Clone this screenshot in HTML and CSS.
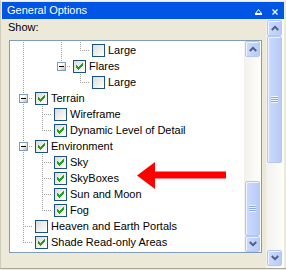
FILE: index.html
```html
<!DOCTYPE html>
<html lang="en">
<head>
  <meta charset="UTF-8">
  <title>General Options</title>
  <link rel="stylesheet" href="styles.css">
</head>
<body>
  <div class="window">
    <div class="titlebar">
      <span class="title">General Options</span>
      <span class="title-btns">
        <svg width="7" height="6" viewBox="0 0 7 6"><path d="M3.5 0.5 L6.5 4.5 L0.5 4.5 Z" fill="none" stroke="#fff"/><rect y="4" width="7" height="2" fill="#fff"/></svg>
        <svg width="6" height="6" viewBox="0 0 6 6"><path d="M0.5 0.5 L5.5 5.5 M5.5 0.5 L0.5 5.5" stroke="#fff" stroke-width="1.3"/></svg>
      </span>
    </div>

    <div class="content">
      <div class="pane">
        <div class="label">Show:</div>
        <div class="tree">
          <div class="rows">
            <div class="row"><span class="c i"></span><span class="c"></span><span class="c i"></span><span class="c l"></span><span class="chk"></span><span class="txt">Large</span></div>
            <div class="row"><span class="c i"></span><span class="c"></span><span class="c l"><span class="exp"></span></span><span class="chk on"><svg viewBox="0 0 7 7"><path d="M0 2H1V3H2V4H3V3H4V2H5V1H6V0H7V3H6V4H5V5H4V6H3V7H2V6H1V5H0Z"/></svg></span><span class="txt">Flares</span></div>
            <div class="row"><span class="c i"></span><span class="c"></span><span class="c"></span><span class="c l"></span><span class="chk"></span><span class="txt">Large</span></div>
            <div class="row"><span class="c t"><span class="exp"></span></span><span class="chk on"><svg viewBox="0 0 7 7"><path d="M0 2H1V3H2V4H3V3H4V2H5V1H6V0H7V3H6V4H5V5H4V6H3V7H2V6H1V5H0Z"/></svg></span><span class="txt">Terrain</span></div>
            <div class="row"><span class="c i"></span><span class="c t"></span><span class="chk"></span><span class="txt">Wireframe</span></div>
            <div class="row"><span class="c i"></span><span class="c l"></span><span class="chk on"><svg viewBox="0 0 7 7"><path d="M0 2H1V3H2V4H3V3H4V2H5V1H6V0H7V3H6V4H5V5H4V6H3V7H2V6H1V5H0Z"/></svg></span><span class="txt">Dynamic Level of Detail</span></div>
            <div class="row"><span class="c t"><span class="exp"></span></span><span class="chk on"><svg viewBox="0 0 7 7"><path d="M0 2H1V3H2V4H3V3H4V2H5V1H6V0H7V3H6V4H5V5H4V6H3V7H2V6H1V5H0Z"/></svg></span><span class="txt">Environment</span></div>
            <div class="row"><span class="c i"></span><span class="c t"></span><span class="chk on"><svg viewBox="0 0 7 7"><path d="M0 2H1V3H2V4H3V3H4V2H5V1H6V0H7V3H6V4H5V5H4V6H3V7H2V6H1V5H0Z"/></svg></span><span class="txt">Sky</span></div>
            <div class="row"><span class="c i"></span><span class="c t"></span><span class="chk on"><svg viewBox="0 0 7 7"><path d="M0 2H1V3H2V4H3V3H4V2H5V1H6V0H7V3H6V4H5V5H4V6H3V7H2V6H1V5H0Z"/></svg></span><span class="txt">SkyBoxes</span></div>
            <div class="row"><span class="c i"></span><span class="c t"></span><span class="chk on"><svg viewBox="0 0 7 7"><path d="M0 2H1V3H2V4H3V3H4V2H5V1H6V0H7V3H6V4H5V5H4V6H3V7H2V6H1V5H0Z"/></svg></span><span class="txt">Sun and Moon</span></div>
            <div class="row"><span class="c i"></span><span class="c l"></span><span class="chk on"><svg viewBox="0 0 7 7"><path d="M0 2H1V3H2V4H3V3H4V2H5V1H6V0H7V3H6V4H5V5H4V6H3V7H2V6H1V5H0Z"/></svg></span><span class="txt">Fog</span></div>
            <div class="row"><span class="c t"></span><span class="chk"></span><span class="txt">Heaven and Earth Portals</span></div>
            <div class="row"><span class="c l"></span><span class="chk on"><svg viewBox="0 0 7 7"><path d="M0 2H1V3H2V4H3V3H4V2H5V1H6V0H7V3H6V4H5V5H4V6H3V7H2V6H1V5H0Z"/></svg></span><span class="txt">Shade Read-only Areas</span></div>
          </div>

          <div class="sb sb-inner">
            <div class="sb-btn"><svg width="8" height="6" viewBox="0 0 8 6"><polyline points="0.8,5 4,1.8 7.2,5" fill="none" stroke="#4d6185" stroke-width="2"/></svg></div>
            <div class="sb-space"></div>
            <div class="sb-thumb thumb-inner"><span class="grip"></span></div>
            <div class="sb-btn"><svg width="8" height="6" viewBox="0 0 8 6"><polyline points="0.8,1 4,4.2 7.2,1" fill="none" stroke="#4d6185" stroke-width="2"/></svg></div>
          </div>

          <!-- red callout arrow -->
          <svg class="arrow" width="90" height="27" viewBox="0 0 90 27"><polygon points="0,13.5 18,0 18,9.5 89,9.5 89,16.5 18,16.5 18,27" fill="#ff0000"/></svg>
        </div>
      </div>

      <div class="sb sb-outer">
        <div class="sb-btn"><svg width="8" height="6" viewBox="0 0 8 6"><polyline points="0.8,5 4,1.8 7.2,5" fill="none" stroke="#4d6185" stroke-width="2"/></svg></div>
        <div class="sb-thumb thumb-outer"><span class="grip"></span></div>
        <div class="sb-space"></div>
        <div class="sb-btn"><svg width="8" height="6" viewBox="0 0 8 6"><polyline points="0.8,1 4,4.2 7.2,1" fill="none" stroke="#4d6185" stroke-width="2"/></svg></div>
      </div>
    </div>
  </div>
</body>
</html>
```

FILE: styles.css
```css
* {
  box-sizing: border-box;
  margin: 0;
  padding: 0;
}

body {
  width: 286px;
  height: 270px;
  overflow: hidden;
  background: #ece9d8;
  font-family: "Liberation Sans", Arial, sans-serif;
  font-size: 11px;
  color: #000;
}

.window {
  height: 269px;
  padding: 1px 2px 0 1px;
  border-top: 1px solid #f5f4ee;
  border-left: 1px solid #d0ccbc;
  border-bottom: 1px solid #aca899;
}

/* title bar */
.titlebar {
  height: 17px;
  background: #0055e5;
  color: #fff;
  display: flex;
  align-items: center;
  justify-content: space-between;
  padding: 0 6px 0 5px;
  line-height: 17px;
}

.title-btns {
  display: flex;
  gap: 10px;
  margin-top: 2px;
}

.title-btns svg {
  display: block;
}

.content {
  display: flex;
  height: 249px;
}

.pane {
  flex: 1;
  padding: 0 4px 0 7px;
}

.label {
  height: 21px;
  padding-top: 1px;
  margin-left: -1px;
  line-height: 14px;
}

/* tree view */
.tree {
  position: relative;
  display: flex;
  height: 213px;
  border: 1px solid #7f9db9;
  background: #fff;
}

.rows {
  flex: 1;
  padding: 1px 0 0 4px;
  overflow: hidden;
}

.row {
  display: flex;
  align-items: flex-start;
  height: 16px;
  line-height: 16px;
  white-space: nowrap;
}

.c {
  position: relative;
  flex: none;
  width: 19px;
  height: 16px;
}

.c.i::before,
.c.t::before,
.c.l::before {
  content: "";
  position: absolute;
  left: 9px;
  top: 0;
  width: 1px;
  height: 16px;
  background: repeating-linear-gradient(to bottom, #a0a0a0 0 1px, transparent 1px 2px);
}

.c.l::before {
  height: 9px;
}

.c.t::after,
.c.l::after {
  content: "";
  position: absolute;
  left: 9px;
  top: 8px;
  width: 10px;
  height: 1px;
  background: repeating-linear-gradient(to right, #a0a0a0 0 1px, transparent 1px 2px);
}

.exp {
  position: absolute;
  z-index: 1;
  left: 5px;
  top: 4px;
  width: 9px;
  height: 9px;
  border: 1px solid #7f9db9;
  background: linear-gradient(135deg, #fff 35%, #c4c0b0);
}

.exp::before {
  content: "";
  position: absolute;
  left: 1px;
  top: 3px;
  width: 5px;
  height: 1px;
  background: #000;
}

.chk {
  flex: none;
  width: 13px;
  height: 13px;
  margin: 2px 3px 0 2px;
  padding: 2px;
  border: 1px solid #1c5180;
  background: linear-gradient(135deg, #dcdcd7, #fff);
}

.chk svg {
  display: block;
  width: 7px;
  height: 7px;
  fill: #21a121;
  shape-rendering: crispEdges;
}

/* scrollbars */
.sb {
  display: flex;
  flex-direction: column;
  flex: none;
  width: 17px;
  background: linear-gradient(to right, #f3f1ec, #fefefb);
}

.sb-space {
  flex: 1;
}

.sb-btn,
.sb-thumb {
  flex: none;
  display: flex;
  align-items: center;
  justify-content: center;
  border: 1px solid #b4c7f2;
  border-radius: 2px;
  box-shadow: inset 1px 1px #eef3fe;
  background: linear-gradient(to right, #cddafd, #b8cbf7);
}

.sb-btn {
  height: 16px;
  margin: 0 1px;
}

.sb-btn svg {
  display: block;
}

.thumb-inner {
  height: 55px;
  margin: 0 1px;
}

.sb-outer {
  width: 18px;
  height: 249px;
  padding: 1px 2px 2px 1px;
}

.sb-outer .sb-btn {
  margin: 0;
}

.thumb-outer {
  height: 127px;
}

.grip {
  width: 7px;
  height: 7px;
  background: repeating-linear-gradient(to bottom, #eef4fe 0 1px, #8ca8ec 1px 2px);
}

.arrow {
  position: absolute;
  left: 127px;
  top: 121px;
}
```
